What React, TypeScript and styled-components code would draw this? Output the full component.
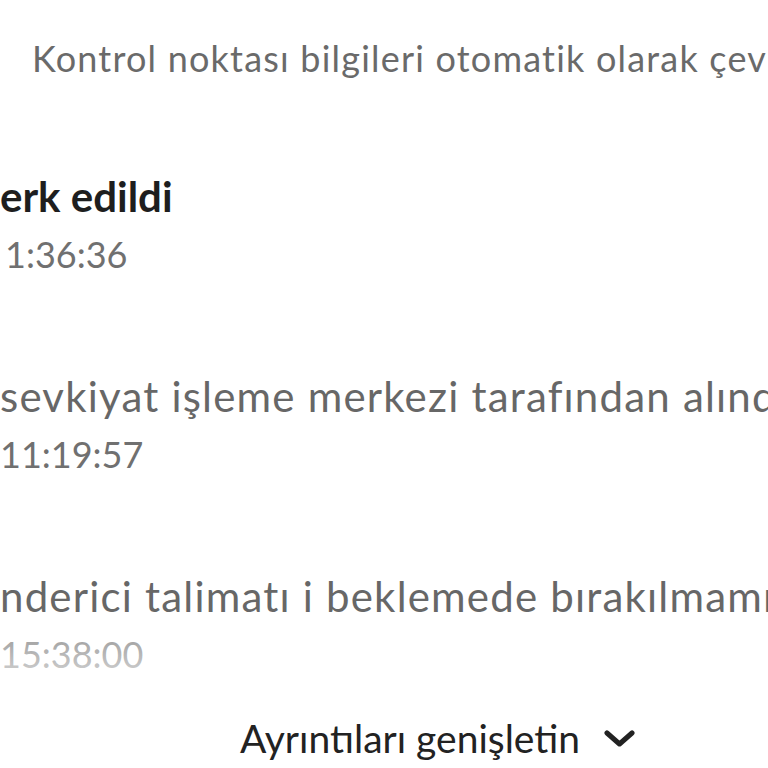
import React from "react";
import styled, { createGlobalStyle } from "styled-components";

const GlobalStyle = createGlobalStyle`
  html, body {
    margin: 0;
    padding: 0;
    background: #ffffff;
  }
  body {
    font-family: Lato, "Noto Sans", "Liberation Sans", sans-serif;
    -webkit-font-smoothing: antialiased;
  }
`;

const Page = styled.div`
  width: 768px;
  height: 768px;
  overflow: hidden;
  background: #ffffff;
  display: flex;
  flex-direction: column;
`;

const Notice = styled.p`
  margin: 36px 0 0 0;
  padding-left: 32px;
  font-size: 36px;
  line-height: 44px;
  letter-spacing: 1.2px;
  color: #6a6a6a;
  white-space: nowrap;
`;

const Timeline = styled.ul`
  position: relative;
  list-style: none;
  margin: 91px 0 0 0;
  padding: 0;
  display: flex;
  flex-direction: column;
  gap: 95px;
`;

const Event = styled.li`
  display: flex;
  flex-direction: column;
  gap: 11px;
  white-space: nowrap;
`;

const Title = styled.div<{ $current?: boolean; $indent?: number }>`
  font-size: 42px;
  line-height: 50px;
  letter-spacing: ${(p) => (p.$current ? 0 : 1.2)}px;
  padding-left: ${(p) => p.$indent ?? 0}px;
  font-weight: ${(p) => (p.$current ? 700 : 400)};
  color: ${(p) => (p.$current ? "#1e1e1e" : "#676767")};
`;

const Time = styled.div<{ $indent?: number }>`
  font-size: 36px;
  line-height: 44px;
  padding-left: ${(p) => p.$indent ?? 0}px;
  color: #707070;
`;

const Fade = styled.div`
  position: absolute;
  left: 0;
  right: 0;
  bottom: -8px;
  height: 64px;
  background: linear-gradient(
    to bottom,
    rgba(255, 255, 255, 0.2),
    rgba(255, 255, 255, 0.75)
  );
  pointer-events: none;
`;

const ExpandButton = styled.button`
  margin: 40px 0 0 0;
  padding: 0 0 0 240px;
  border: none;
  background: none;
  display: flex;
  align-items: center;
  gap: 24px;
  font-family: inherit;
  font-size: 39px;
  line-height: 44px;
  color: #222222;
  cursor: pointer;
  white-space: nowrap;
`;

const Chevron = () => (
  <svg width="31" height="17" viewBox="0 0 31 17" aria-hidden="true">
    <polyline
      points="3,3 15.5,14 28,3"
      fill="none"
      stroke="#222222"
      strokeWidth="5"
      strokeLinecap="round"
      strokeLinejoin="round"
    />
  </svg>
);

const events = [
  { title: "erk edildi", time: "1:36:36", current: true, indent: 0, timeIndent: 5 },
  { title: " sevkiyat işleme merkezi tarafından alındı", time: "11:19:57", current: false, indent: 0, timeIndent: 0 },
  { title: "nderici talimatı i beklemede bırakılmamış", time: "15:38:00", current: false, indent: 0, timeIndent: 0 },
];

export default function App() {
  return (
    <>
      <GlobalStyle />
      <Page>
        <Notice>Kontrol noktası bilgileri otomatik olarak çevrildi</Notice>
        <Timeline>
          {events.map((e) => (
            <Event key={e.time}>
              <Title $current={e.current} $indent={e.indent}>
                {e.title}
              </Title>
              <Time $indent={e.timeIndent}>{e.time}</Time>
            </Event>
          ))}
          <Fade />
        </Timeline>
        <ExpandButton>
          Ayrıntıları genişletin
          <Chevron />
        </ExpandButton>
      </Page>
    </>
  );
}
